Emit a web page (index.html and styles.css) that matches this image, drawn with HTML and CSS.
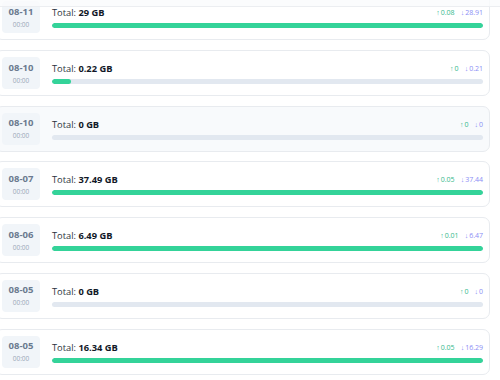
FILE: index.html
```html
<!DOCTYPE html>
<html>
<head>
<meta charset="utf-8">
<link rel="stylesheet" href="styles.css">
</head>
<body>
<div class="topbar"></div>
<div class="list">
  <div class="card">
    <div class="date"><div class="day">08-11</div><div class="time">00:00</div></div>
    <div class="info">
      <div class="row"><div class="total">Total: <b>29 GB</b></div><div class="stats"><span class="up">↑ 0.08</span><span class="down">↓ 28.91</span></div></div>
      <div class="track"><div class="fill" style="width:100%"></div></div>
    </div>
  </div>
  <div class="card">
    <div class="date"><div class="day">08-10</div><div class="time">00:00</div></div>
    <div class="info">
      <div class="row"><div class="total">Total: <b>0.22 GB</b></div><div class="stats"><span class="up">↑ 0</span><span class="down">↓ 0.21</span></div></div>
      <div class="track"><div class="fill" style="width:4.4%"></div></div>
    </div>
  </div>
  <div class="card hover">
    <div class="date"><div class="day">08-10</div><div class="time">00:00</div></div>
    <div class="info">
      <div class="row"><div class="total">Total: <b>0 GB</b></div><div class="stats"><span class="up">↑ 0</span><span class="down">↓ 0</span></div></div>
      <div class="track"><div class="fill" style="width:0%"></div></div>
    </div>
  </div>
  <div class="card">
    <div class="date"><div class="day">08-07</div><div class="time">00:00</div></div>
    <div class="info">
      <div class="row"><div class="total">Total: <b>37.49 GB</b></div><div class="stats"><span class="up">↑ 0.05</span><span class="down">↓ 37.44</span></div></div>
      <div class="track"><div class="fill" style="width:100%"></div></div>
    </div>
  </div>
  <div class="card">
    <div class="date"><div class="day">08-06</div><div class="time">00:00</div></div>
    <div class="info">
      <div class="row"><div class="total">Total: <b>6.49 GB</b></div><div class="stats"><span class="up">↑ 0.01</span><span class="down">↓ 6.47</span></div></div>
      <div class="track"><div class="fill" style="width:100%"></div></div>
    </div>
  </div>
  <div class="card">
    <div class="date"><div class="day">08-05</div><div class="time">00:00</div></div>
    <div class="info">
      <div class="row"><div class="total">Total: <b>0 GB</b></div><div class="stats"><span class="up">↑ 0</span><span class="down">↓ 0</span></div></div>
      <div class="track"><div class="fill" style="width:0%"></div></div>
    </div>
  </div>
  <div class="card">
    <div class="date"><div class="day">08-05</div><div class="time">00:00</div></div>
    <div class="info">
      <div class="row"><div class="total">Total: <b>16.34 GB</b></div><div class="stats"><span class="up">↑ 0.05</span><span class="down">↓ 16.29</span></div></div>
      <div class="track"><div class="fill" style="width:100%"></div></div>
    </div>
  </div>
</div>
</body>
</html>
```
FILE: styles.css
```css
html, body {
  margin: 0;
  padding: 0;
  background: #ffffff;
}
body {
  font-family: "Open Sans", "Noto Sans", sans-serif;
  overflow: hidden;
}
.topbar {
  position: fixed;
  top: 0;
  left: 0;
  right: 0;
  height: 6px;
  background: rgba(250, 251, 252, 0.82);
  border-bottom: 1px solid #eceef1;
  z-index: 2;
}
.list {
  display: flex;
  flex-direction: column;
  gap: 9.7px;
  margin: -5.6px 10px 0 -5px;
}
.card {
  display: flex;
  align-items: center;
  gap: 12px;
  height: 46px;
  box-sizing: border-box;
  padding: 0 6px 0 6px;
  border: 1px solid #e8ebef;
  border-radius: 7px;
  background: #ffffff;
}
.card.hover {
  background: #f8fafc;
}
.date {
  width: 38px;
  height: 32px;
  flex: none;
  background: #f1f5f9;
  border-radius: 4px;
  display: flex;
  flex-direction: column;
  align-items: center;
  justify-content: center;
  gap: 2px;
}
.day {
  font-size: 9.5px;
  font-weight: 700;
  color: #6b7a8f;
  line-height: 12px;
}
.time {
  font-size: 6.5px;
  color: #9aa6b8;
  line-height: 9px;
}
.info {
  flex: 1;
  display: flex;
  flex-direction: column;
  gap: 4px;
}
.row {
  display: flex;
  justify-content: space-between;
  align-items: center;
}
.total {
  font-size: 9.3px;
  color: #2b3340;
  line-height: 13px;
}
.total b {
  font-weight: 700;
  color: #111827;
}
.stats {
  display: flex;
  gap: 6px;
  font-size: 7px;
  word-spacing: -0.8px;
}
.up { color: #35b88c; }
.down { color: #8b8ef5; }
.track {
  height: 5px;
  background: #e2e8f0;
  border-radius: 3px;
  overflow: hidden;
}
.fill {
  height: 100%;
  background: #34d399;
  border-radius: 3px;
}
```
